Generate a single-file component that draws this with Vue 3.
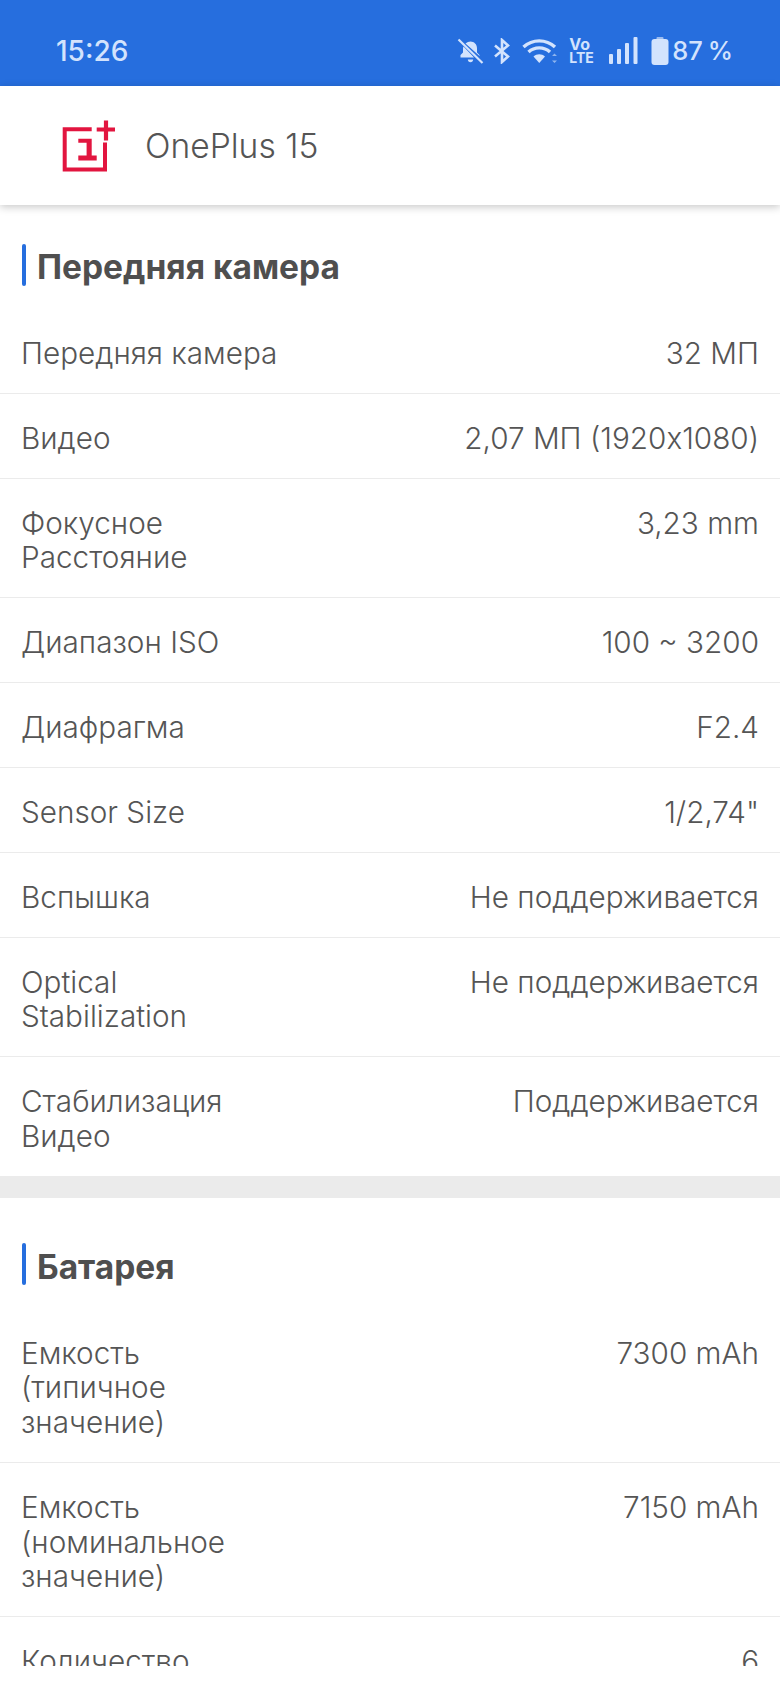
<template>
  <div class="page">
    <div class="status-bar">
      <span class="time">15:26</span>
      <div class="status-icons">
        <svg class="ic-bell" width="27" height="26" viewBox="0 0 27 26">
          <path d="M8.500 5.500C10 4.200 11.800 3.500 13.500 3.500c3.500 0 6.500 2.800 6.500 6.700v4.300l2.500 2.500v1z" fill="#d3e3fd" />
          <path d="M6.500 8.500L17 19.500H3.500v-2.500l2.500-2.500v-4c0-.7.200-1.400.5-2z" fill="#d3e3fd" />
          <path d="M10.800 21.500h5.400c0 1.500-1.200 2.700-2.700 2.700s-2.700-1.200-2.700-2.700z" fill="#d3e3fd" />
          <path d="M1.500 1.500L25.500 25" stroke="#d3e3fd" stroke-width="2.200" />
        </svg>
        <svg class="ic-bt" width="18" height="26" viewBox="0 0 18 26">
          <path d="M2 7.500L15 18.500L9 24V2L15 7.500L2 18.500" fill="none" stroke="#d3e3fd" stroke-width="2.600" />
        </svg>
        <svg class="ic-wifi" width="37" height="26" viewBox="0 0 37 26">
          <path d="M1.500 9C10.500 .8 24 .8 33 9" fill="none" stroke="#d3e3fd" stroke-width="3.400" />
          <path d="M6.500 14C12.500 8.500 22 8.500 28 14" fill="none" stroke="#d3e3fd" stroke-width="3.400" />
          <path d="M11.500 18.500C14.800 15.500 19.700 15.500 23 18.500L17.250 25z" fill="#d3e3fd" />
          <path d="M32.500 15.500l2.500 2.500h-5zM32.500 25l-2.500-2.500h5z" fill="#8fb5ee" />
        </svg>
        <div class="volte"><span class="vo">Vo</span><span>LTE</span></div>
        <svg class="ic-signal" width="29" height="27" viewBox="0 0 29 27">
          <rect x="0" y="17" width="4" height="10" rx="1" fill="#d3e3fd" />
          <rect x="8" y="12" width="4" height="15" rx="1" fill="#d3e3fd" />
          <rect x="16" y="6" width="4" height="21" rx="1" fill="#d3e3fd" />
          <rect x="24.500" y="0" width="4" height="27" rx="1" fill="#d3e3fd" />
        </svg>
        <svg class="ic-battery" width="18" height="28" viewBox="0 0 18 28">
          <rect x="5.500" y="0" width="7" height="3" rx="1" fill="#9dbdf0" />
          <rect x="0.500" y="2" width="17" height="26" rx="3" fill="#d3e3fd" />
        </svg>
        <span class="pct">87 %</span>
      </div>
    </div>

    <header class="app-header">
      <svg class="logo" width="54" height="54" viewBox="0 0 54 54">
        <path d="M29.700 10.200H2.700V50.500H43V23.500" fill="none" stroke="#e2153f" stroke-width="4" />
        <path d="M34.700 10.500H53M44 1.500V21.500" fill="none" stroke="#e2153f" stroke-width="4.200" />
        <path d="M16.300 19.800H29.700V36.500H34.700V41.500H16.300V36.500H24.600V23.800H16.300Z" fill="#e2153f" />
      </svg>
      <span class="model">OnePlus 15</span>
    </header>

    <main class="content">
      <section v-for="section in sections" :key="section.title" class="section">
        <h2 class="section-title">{{ section.title }}</h2>
        <div v-for="row in section.rows" :key="row.label" class="row">
          <div class="label">
            <div v-for="line in row.label.split('|')" :key="line">{{ line }}</div>
          </div>
          <div class="value">{{ row.value }}</div>
        </div>
      </section>
    </main>
  </div>
</template>

<script setup>
const sections = [
  {
    title: 'Передняя камера',
    rows: [
      { label: 'Передняя камера', value: '32 МП' },
      { label: 'Видео', value: '2,07 МП (1920x1080)' },
      { label: 'Фокусное|Расстояние', value: '3,23 mm' },
      { label: 'Диапазон ISO', value: '100 ~ 3200' },
      { label: 'Диафрагма', value: 'F2.4' },
      { label: 'Sensor Size', value: '1/2,74"' },
      { label: 'Вспышка', value: 'Не поддерживается' },
      { label: 'Optical|Stabilization', value: 'Не поддерживается' },
      { label: 'Стабилизация|Видео', value: 'Поддерживается' }
    ]
  },
  {
    title: 'Батарея',
    rows: [
      { label: 'Емкость|(типичное|значение)', value: '7300 mAh' },
      { label: 'Емкость|(номинальное|значение)', value: '7150 mAh' },
      { label: 'Количество', value: '6' }
    ]
  }
]
</script>

<style>
html, body {
  margin: 0;
  background: #fff;
}
</style>

<style scoped>
.page {
  width: 780px;
  height: 1700px;
  background: #fff;
  font-family: Inter, Roboto, "Liberation Sans", sans-serif;
  color: #555;
  overflow: hidden;
}

.status-bar {
  height: 86px;
  background: #266ede;
  color: #d3e3fd;
  display: flex;
  justify-content: space-between;
  align-items: center;
  padding: 0 47px 0 56px;
  box-sizing: border-box;
}

.time {
  font-size: 28px;
  font-weight: 500;
  position: relative;
  top: 8px;
}

.status-icons {
  display: flex;
  align-items: center;
  padding-top: 15px;
}

.ic-bt { margin-left: 9px; }
.ic-wifi { margin-left: 11px; }
.volte {
  margin-left: 10.600px;
  font-size: 14px;
  font-weight: 700;
  line-height: 13px;
  display: flex;
  flex-direction: column;
  width: 24px;
}
.vo { font-size: 16px; }
.ic-signal { margin-left: 16px; }
.ic-battery { margin-left: 12.500px; }
.pct {
  margin-left: 3.500px;
  font-size: 25.5px;
  font-weight: 500;
  word-spacing: -2px;
}

.app-header {
  height: 119px;
  display: flex;
  align-items: center;
  padding-left: 62px;
  box-shadow: 0 2px 8px rgba(0, 0, 0, 0.22);
  position: relative;
}

.model {
  margin-left: 29px;
  font-size: 33.6px;
  font-weight: 300;
  color: #555;
}

.content {
  height: 1461px;
  overflow: hidden;
}

.section {
  border-bottom: 22px solid #ebebeb;
}

.section-title {
  margin: 0 0 0 22px;
  padding: 41px 0 0 15px;
  font-size: 33.5px;
  line-height: 42px;
  font-weight: 700;
  color: #4f4f4f;
  height: 39px;
  position: relative;
}

.section-title::before {
  content: "";
  position: absolute;
  left: 0;
  top: 39px;
  width: 4px;
  height: 42px;
  border-radius: 2px;
  background: #266ede;
}

.section:last-child .section-title {
  padding-top: 48px;
}

.section:last-child .section-title::before {
  top: 45px;
}

.row {
  display: flex;
  justify-content: space-between;
  padding: 27px 21px 22.15px;
  font-size: 29.7px;
  line-height: 34.7px;
  font-weight: 300;
  border-bottom: 1px solid #ebebeb;
}

.section-title + .row {
  margin-top: 24px;
}

.row:last-child {
  border-bottom: 0;
}

.value {
  text-align: right;
}
</style>
